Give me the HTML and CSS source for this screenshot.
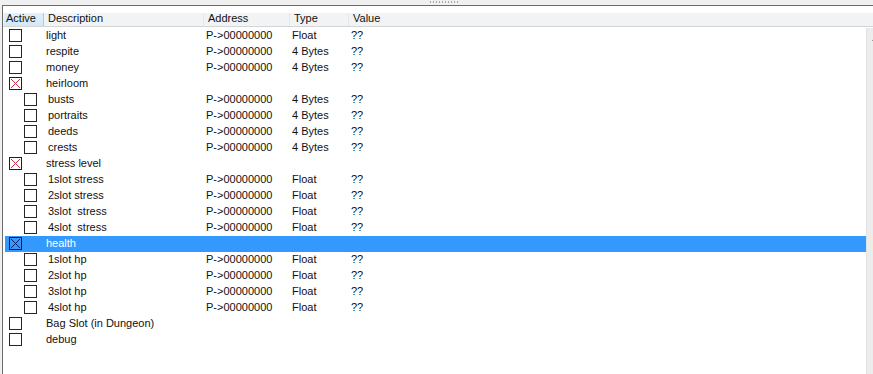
FILE: index.html
```html
<!DOCTYPE html>
<html lang="en">
<head>
    <meta charset="UTF-8">
    <title>Cheat Table</title>
    <link rel="stylesheet" href="styles.css">
</head>
<body>
    <div class="topbar"><span class="grip"></span></div>

    <div class="panel">
        <div class="header">
            <div class="hcell col-active hot">Active</div>
            <div class="hcell col-desc">Description</div>
            <div class="hcell col-addr">Address</div>
            <div class="hcell col-type">Type</div>
            <div class="hcell col-value">Value</div>
        </div>

        <div class="body">
            <div class="rows">
                <div class="row"><span class="check"><span class="box"></span></span><span class="desc">light</span><span class="addr">P-&gt;00000000</span><span class="type">Float</span><span class="value">??</span></div>
                <div class="row"><span class="check"><span class="box"></span></span><span class="desc">respite</span><span class="addr">P-&gt;00000000</span><span class="type">4 Bytes</span><span class="value">??</span></div>
                <div class="row"><span class="check"><span class="box"></span></span><span class="desc">money</span><span class="addr">P-&gt;00000000</span><span class="type">4 Bytes</span><span class="value">??</span></div>
                <div class="row"><span class="check"><span class="box checked"><svg width="11" height="11" viewBox="0 0 11 11"><path d="M1 1 L10 10 M10 1 L1 10"/></svg></span></span><span class="desc">heirloom</span><span class="addr"></span><span class="type"></span><span class="value"></span></div>
                <div class="row child"><span class="check"><span class="box"></span></span><span class="desc">busts</span><span class="addr">P-&gt;00000000</span><span class="type">4 Bytes</span><span class="value">??</span></div>
                <div class="row child"><span class="check"><span class="box"></span></span><span class="desc">portraits</span><span class="addr">P-&gt;00000000</span><span class="type">4 Bytes</span><span class="value">??</span></div>
                <div class="row child"><span class="check"><span class="box"></span></span><span class="desc">deeds</span><span class="addr">P-&gt;00000000</span><span class="type">4 Bytes</span><span class="value">??</span></div>
                <div class="row child"><span class="check"><span class="box"></span></span><span class="desc">crests</span><span class="addr">P-&gt;00000000</span><span class="type">4 Bytes</span><span class="value">??</span></div>
                <div class="row"><span class="check"><span class="box checked"><svg width="11" height="11" viewBox="0 0 11 11"><path d="M1 1 L10 10 M10 1 L1 10"/></svg></span></span><span class="desc">stress level</span><span class="addr"></span><span class="type"></span><span class="value"></span></div>
                <div class="row child"><span class="check"><span class="box"></span></span><span class="desc">1slot stress</span><span class="addr">P-&gt;00000000</span><span class="type">Float</span><span class="value">??</span></div>
                <div class="row child"><span class="check"><span class="box"></span></span><span class="desc">2slot stress</span><span class="addr">P-&gt;00000000</span><span class="type">Float</span><span class="value">??</span></div>
                <div class="row child"><span class="check"><span class="box"></span></span><span class="desc">3slot  stress</span><span class="addr">P-&gt;00000000</span><span class="type">Float</span><span class="value">??</span></div>
                <div class="row child"><span class="check"><span class="box"></span></span><span class="desc">4slot  stress</span><span class="addr">P-&gt;00000000</span><span class="type">Float</span><span class="value">??</span></div>
                <div class="row selected"><span class="check"><span class="box checked"><svg width="11" height="11" viewBox="0 0 11 11"><path d="M1 1 L10 10 M10 1 L1 10"/></svg></span></span><span class="desc">health</span><span class="addr"></span><span class="type"></span><span class="value"></span></div>
                <div class="row child"><span class="check"><span class="box"></span></span><span class="desc">1slot hp</span><span class="addr">P-&gt;00000000</span><span class="type">Float</span><span class="value">??</span></div>
                <div class="row child"><span class="check"><span class="box"></span></span><span class="desc">2slot hp</span><span class="addr">P-&gt;00000000</span><span class="type">Float</span><span class="value">??</span></div>
                <div class="row child"><span class="check"><span class="box"></span></span><span class="desc">3slot hp</span><span class="addr">P-&gt;00000000</span><span class="type">Float</span><span class="value">??</span></div>
                <div class="row child"><span class="check"><span class="box"></span></span><span class="desc">4slot hp</span><span class="addr">P-&gt;00000000</span><span class="type">Float</span><span class="value">??</span></div>
                <div class="row"><span class="check"><span class="box"></span></span><span class="desc">Bag Slot (in Dungeon)</span><span class="addr"></span><span class="type"></span><span class="value"></span></div>
                <div class="row"><span class="check"><span class="box"></span></span><span class="desc">debug</span><span class="addr"></span><span class="type"></span><span class="value"></span></div>
            </div>

            <div class="scrollbar">
                <svg class="arrow" width="17" height="17" viewBox="0 0 17 17"><path d="M5 11 L8.5 7 L12 11 Z"/></svg>
            </div>
        </div>
    </div>
</body>
</html>
```

FILE: styles.css
```css
html, body {
    margin: 0;
    height: 100%;
    overflow: hidden;
}
body {
    font-family: "Liberation Sans", Arial, sans-serif;
    font-size: 11px;
    color: #111;
    background-color: #f0f0f0;
}
.topbar {
    height: 5px;
    display: flex;
    align-items: flex-start;
}
.grip {
    margin: 1px 0 0 430px;
    width: 28px;
    height: 2px;
    background-image: repeating-linear-gradient(90deg, #a8a8a8 0 1px, transparent 1px 3px);
}
.panel {
    margin-left: 2px;
    height: calc(100% - 5px);
    box-sizing: border-box;
    border-top: 1px solid #6b6b6b;
    border-left: 1px solid #6b6b6b;
    background-color: #fff;
    padding-top: 7px;
    display: flex;
    flex-direction: column;
}
.header {
    display: flex;
    height: 13px;
    background-color: #f2f3f5;
    border-bottom: 1px solid #d5d5d5;
}
.hcell {
    box-sizing: border-box;
    line-height: 11px;
    padding-left: 4px;
    border-right: 1px solid #e4e7eb;
    white-space: nowrap;
}
.hcell.hot {
    background: linear-gradient(#e2f0fb, #d2e7f8);
    border-right-color: #a9cbe6;
    margin-left: 1px;
    padding-left: 2px;
}
.col-active { width: 40px; }
.col-desc { width: 160px; padding-left: 4px; }
.col-addr { width: 86px; }
.col-type { width: 59px; }
.col-value { flex: 1; border-right: none; }

.body {
    flex: 1;
    display: flex;
    min-height: 0;
}
.rows {
    flex: 0 0 861px;
    padding-top: 1px;
    padding-left: 2px;
}
.row {
    display: flex;
    height: 16px;
    line-height: 15px;
    white-space: pre;
}
.row.selected {
    background-color: #3399ff;
    color: #fff;
}
.check {
    width: 38px;
    flex: none;
    padding: 1px 0 0 4px;
    box-sizing: border-box;
}
.child .check {
    padding-left: 19px;
}
.box {
    display: block;
    width: 13px;
    height: 13px;
    box-sizing: border-box;
    border: 1px solid #262626;
}
.box svg {
    display: block;
}
.box svg path {
    stroke: #cc3050;
    stroke-width: 1;
    fill: none;
}
.box.checked {
    border-color: #3a1010;
}
.selected .box {
    border-color: #0a1a40;
}
.selected .box svg path {
    stroke: #0c1f5c;
}
.desc {
    width: 160px;
    flex: none;
    padding-left: 3px;
    box-sizing: border-box;
}
.child .desc {
    padding-left: 5px;
}
.addr {
    width: 86px;
    flex: none;
    padding-left: 3px;
    box-sizing: border-box;
}
.type {
    width: 59px;
    flex: none;
    padding-left: 3px;
    box-sizing: border-box;
}
.value {
    flex: 1;
    padding-left: 3px;
}
.scrollbar {
    flex: 0 0 17px;
    margin-top: 1px;
    background-color: #ececec;
    border-left: 1px solid #e2e2e2;
}
.arrow {
    display: block;
    margin-top: 2px;
}
.arrow path {
    fill: #606060;
}
```
